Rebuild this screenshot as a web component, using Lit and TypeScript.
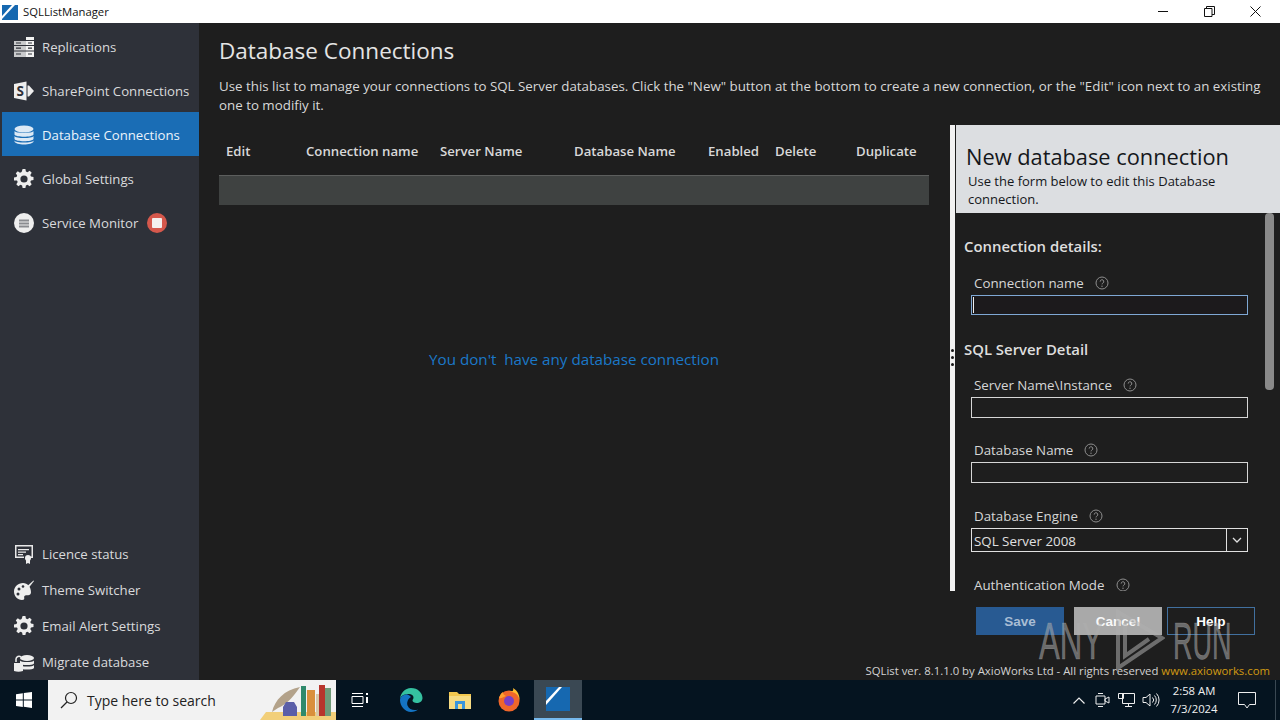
import { LitElement, html, css, svg } from 'lit';
import { customElement } from 'lit/decorators.js';

const help = html`<svg class="help" width="14" height="14" viewBox="0 0 14 14">
  <circle cx="7" cy="7" r="6" fill="none" stroke="#8d8d8d" stroke-width="1"/>
  <path d="M5.2 5.6a1.8 1.8 0 1 1 2.7 1.5c-.6.4-.9.7-.9 1.3" fill="none" stroke="#8d8d8d" stroke-width="1"/>
  <circle cx="7" cy="10.2" r=".7" fill="#8d8d8d"/>
</svg>`;

const gearPath = 'M8.6 0h2.8l.5 2.5 1.6.7 2.2-1.4 2 2-1.4 2.2.7 1.6 2.5.5v2.8l-2.5.5-.7 1.6 1.4 2.2-2 2-2.2-1.4-1.6.7-.5 2.5H8.6l-.5-2.5-1.6-.7-2.2 1.4-2-2 1.4-2.2-.7-1.6L0 11.4V8.6l2.5-.5.7-1.6-1.4-2.2 2-2 2.2 1.4 1.6-.7zM10 6.4a3.6 3.6 0 1 0 0 7.2 3.6 3.6 0 0 0 0-7.2z';

const icons: Record<string, unknown> = {
  replications: svg`<path d="M0 4h13v16H0z" fill="#c9cacc"/><path d="M12 0h8v20h-8z" fill="#f2f2f2"/>
    <path d="M0 8.500h20M0 14h20M0 3.500h20" stroke="#2e3139" stroke-width="1"/>
    <path d="M2 6h5M2 11.200h5M2 17h5M14 6h4M14 11.200h4M14 17h4" stroke="#2e3139" stroke-width="1.200"/>`,
  sharepoint: svg`<path d="M0 3l12.500-2.500v19L0 17z" fill="#eee"/><path d="M13.500 4.500h1.500l5 5.500-5 5.500h-1.500z" fill="#eee"/><text x="2.500" y="15" font-size="13.500" font-weight="700" font-family="Open Sans" fill="#2e3139">S</text>`,
  database: svg`<ellipse cx="10" cy="4" rx="9.500" ry="3.500" fill="#dce9f5"/><path d="M.5 6c1 2.500 18 2.500 19 0v3.500c-1 3-18 3-19 0zM.5 11c1 2.800 18 2.800 19 0v3c-1 3-18 3-19 0zM.5 15.500c1 2.800 18 2.800 19 0v1c-1 4-18 4-19 0z" fill="#dce9f5"/>`,
  gear: svg`<path d="${gearPath}" fill="#eee" fill-rule="evenodd"/>`,
  monitor: svg`<circle cx="10" cy="10" r="10" fill="#eee"/><path d="M5 6.500h10v2H5zM5 9.500h10v2H5zM5 12.500h10v2H5z" fill="#8a8c90"/>`,
  licence: svg`<path d="M1 1h18v13h-6v-1.500h4.500V2.500h-15v10H10V14H1z" fill="#e8e8e8"/><path d="M4 5h11v1.200H4zM4 7.500h8v1.200H4zM4 10h5v1.200H4z" fill="#e8e8e8"/><circle cx="14" cy="14" r="3" fill="#eee"/><path d="M12 16h4v4l-2-1-2 1z" fill="#eee"/>`,
  palette: svg`<path d="M9 3C4 3 0 7 0 11.500S3.500 20 8 20c2 0 2.500-1 2.200-2.300-.3-1.500.5-2.500 2-2.500h2c1.500 0 2.800-1 2.800-3C17 7 13.500 3 9 3z" fill="#eee"/><circle cx="5" cy="9" r="1.500" fill="#2e3139"/><circle cx="4" cy="14" r="1.500" fill="#2e3139"/><circle cx="9" cy="6.500" r="1.300" fill="#2e3139"/><path d="M19.500 .5l.5.5-7 9-2.500-1.500z" fill="#eee"/>`,
  migrate: svg`<ellipse cx="13" cy="6" rx="7" ry="3" fill="#eee"/><path d="M6 8.500c1 2 13 2 14 0v3c-1 2-13 2-14 0zM6 13c1 2 13 2 14 0v3c-1 2-13 2-14 0z" fill="#eee"/><path d="M0 11h9v8c-3 1-6 1-9 0z" fill="#eee"/><path d="M2 10V7a3 3 0 0 1 5-2" fill="none" stroke="#eee" stroke-width="1.500"/>`,
};

const navIcon = (name: string) => html`<svg class="nav-icon" width="20" height="20" viewBox="0 0 20 20">${icons[name]}</svg>`;

@customElement('app-root')
export class AppRoot extends LitElement {
  static styles = css`
    :host {
      display: flex;
      flex-direction: column;
      width: 1280px;
      height: 720px;
      overflow: hidden;
      position: relative;
      font-family: "Open Sans", "Noto Sans", sans-serif;
      font-size: 13.2px;
      color: #d6d6d6;
      background: #1e1e1e;
    }
    .titlebar {
      display: flex;
      align-items: center;
      height: 23px;
      flex: none;
      background: #fff;
      color: #111;
      font-size: 11.3px;
      padding-right: 2px;
    }
    .logo { margin: 0 5px 0 2px; }
    .title { flex: 1; }
    .win-btn {
      width: 46px;
      height: 23px;
      display: flex;
      align-items: center;
      justify-content: center;
    }
    .main { flex: 1; display: flex; min-height: 0; }
    .sidebar {
      width: 199px;
      flex: none;
      background: #2e3139;
      display: flex;
      flex-direction: column;
      padding-top: 1px;
      box-sizing: border-box;
    }
    .nav { flex: 1; }
    .item {
      display: flex;
      align-items: center;
      height: 44px;
      box-sizing: border-box;
      padding: 2px 0 0 12px;
      gap: 8px;
      margin-left: 2px;
      color: #d9dadc;
      white-space: nowrap;
    }
    .item.active { background: #1a6db5; color: #eaf3fb; }
    .bottom .item { height: 36px; padding-top: 0; }
    .stop {
      width: 20px;
      height: 20px;
      border-radius: 50%;
      background: #d5584c;
      display: flex;
      align-items: center;
      justify-content: center;
      margin-left: 1px;
    }
    .stop i { width: 10px; height: 10px; background: #f4f0ee; border-radius: 1px; }
    .content { flex: 1; display: flex; flex-direction: column; min-width: 0; }
    .head { height: 102px; flex: none; padding-left: 20px; box-sizing: border-box; }
    h1 {
      margin: 0;
      padding-top: 11px;
      font-size: 22.5px;
      line-height: 34px;
      font-weight: 400;
      color: #e4e4e4;
    }
    .desc { width: 1045px; margin: 9px 0 0; line-height: 19px; color: #d8d8d8; font-size: 13.33px; }
    .split { flex: 1; display: flex; min-height: 0; }
    .list { width: 751px; flex: none; padding: 0 21px 0 20px; box-sizing: border-box; display: flex; flex-direction: column; }
    .thead {
      display: grid;
      grid-template-columns: 80px 134px 134px 134px 67px 81px 1fr;
      padding: 17px 0 0 7px;
      height: 50px;
      box-sizing: border-box;
      line-height: 18px;
      font-weight: 600;
      color: #d8d8d8;
    }
    .row { height: 30px; background: #3f4241; border-top: 1px solid #5c5e5d; box-sizing: border-box; }
    .empty {
      text-align: center;
      color: #1b78c8;
      font-size: 15.2px;
      line-height: 20px;
      margin-top: 144px;
    }
    .panel { width: 330px; flex: none; display: flex; flex-direction: column; position: relative; }
    .panel-top { display: flex; height: 466px; }
    .splitter { width: 5px; margin-right: 1px; flex: none; background: #f2f2f2; }
    .dots { position: absolute; left: 1px; top: 224px; display: flex; flex-direction: column; gap: 4px; }
    .dots i { width: 3px; height: 3px; border-radius: 50%; background: #161616; display: block; }
    .panel-main { flex: 1; display: flex; flex-direction: column; min-width: 0; }
    .panel-head {
      height: 88px;
      flex: none;
      background: #dcdee1;
      color: #15171b;
      padding: 19px 0 0 10px;
      box-sizing: border-box;
    }
    .panel-head h2 { margin: 0; font-size: 21.8px; line-height: 26px; font-weight: 400; white-space: nowrap; }
    .panel-head p { margin: 2px 0 0 2px; width: 290px; line-height: 18px; font-size: 13px; }
    .form-wrap { flex: 1; position: relative; overflow: hidden; }
    .form { padding: 23px 0 0 8px; font-size: 13.33px; }
    .thumb { position: absolute; right: 6px; top: 0; width: 9px; height: 177px; border-radius: 4px; background: #8a8a8a; }
    h3 { margin: 0; font-size: 14.9px; line-height: 20px; font-weight: 600; color: #dedede; }
    h3.second { margin-top: 24px; }
    .field { margin: 24px 0 0 7px; width: 277px; }
    .field.first { margin-top: 18px; }
    .field.second { margin-top: 17px; }
    .field.tight { margin-top: 23px; }
    .field label { display: flex; align-items: center; gap: 11px; height: 18px; padding-left: 3px; color: #d6d6d6; white-space: nowrap; }
    .field.last { margin-top: 26px; }
    .field.last label { height: 14px; line-height: 14px; }
    .input { height: 21px; margin-top: 3px; border: 1px solid #d6d6d6; box-sizing: border-box; }
    .input.focus { height: 20px; border-color: #7fa8d4; background: #1c1a1c; }
    .caret { display: block; width: 1px; height: 16px; margin: 1px 0 0 1px; background: #eee; }
    .select { height: 24px; margin-top: 3px; border: 1px solid #e0e0e0; box-sizing: border-box; display: flex; align-items: center; padding: 1px 0 0 2px; color: #e0e0e0; }
    .select span { flex: 1; }
    .select b { width: 20px; height: 22px; margin-top: -1px; border-left: 1px solid #e0e0e0; display: flex; align-items: center; justify-content: center; }
    .actions { display: flex; margin: 16px 0 0 26px; }
    .btn {
      width: 88px;
      height: 28px;
      display: flex;
      align-items: center;
      justify-content: center;
      box-sizing: border-box;
      font-weight: 700;
      font-size: 13.5px;
      color: #fff;
      font-family: "Liberation Sans", sans-serif;
    }
    .save { background: #285a92; color: #a9bdd4; margin-right: 10px; }
    .cancel { background: #a9a9a9; color: #f8f8f8; margin-right: 5px; }
    .help-btn { border: 1px solid #41709f; }
    .footer {
      height: 18px;
      flex: none;
      text-align: right;
      padding-right: 10px;
      font-size: 11.35px;
      line-height: 18px;
      color: #d2d2d2;
      white-space: nowrap;
    }
    .footer a { color: #d29a12; }
    .taskbar {
      height: 40px;
      flex: none;
      display: flex;
      align-items: center;
      background: #051420;
      color: #f0f0f0;
    }
    .start { width: 48px; display: flex; justify-content: center; }
    .search {
      width: 288px;
      height: 40px;
      background: #f2f2f2;
      display: flex;
      align-items: center;
      padding-left: 12px;
      box-sizing: border-box;
      color: #222;
      font-size: 14px;
      gap: 9px;
      overflow: hidden;
    }
    .search span { flex: 1; white-space: nowrap; }
    .search svg.books { flex: none; }
    .tb { width: 49px; height: 40px; display: flex; align-items: center; justify-content: center; flex: none; }
    .tb.view { width: 48px; margin-right: 2px; }
    .tb.active { width: 48px; margin-left: 1px; background: #3a4853; border-bottom: 2px solid #76b9ed; box-sizing: border-box; }
    .spacer { flex: 1; }
    .tray { width: 24px; display: flex; justify-content: center; flex: none; }
    .clock { width: 50px; margin-left: 6px; text-align: center; font-size: 11.3px; line-height: 18px; white-space: nowrap; }
    .notify { width: 56px; display: flex; justify-content: center; }
    .desk { width: 5px; height: 40px; border-left: 1px solid #3a4853; box-sizing: border-box; }
    .mark {
      position: absolute;
      left: 1039px;
      top: 610px;
      display: flex;
      align-items: center;
      font-family: "Liberation Sans", sans-serif;
      font-size: 52px;
      line-height: 62px;
      color: rgba(175, 175, 175, .55);
      -webkit-text-stroke: .5px rgba(175, 175, 175, .55);
      pointer-events: none;
    }
    .mark span { display: block; transform-origin: left center; }
    .mark .any { width: 74px; transform: scaleX(.6); }
    .mark .play { flex: none; margin-top: -2px; }
    .mark .run { margin-left: 8px; transform: scaleX(.52); }
  `;

  render() {
    return html`
      <div class="titlebar">
        <svg class="logo" width="16" height="16" viewBox="0 0 16 16">
          <rect x="0" y="1" width="16" height="15" fill="#1668b0"/>
          <path d="M0 12L10 1h3L0 15z" fill="#fff"/>
        </svg>
        <div class="title">SQLListManager</div>
        <div class="win-btn"><svg width="11" height="11"><path d="M0 5.500h10" stroke="#111"/></svg></div>
        <div class="win-btn"><svg width="11" height="11"><path d="M.5 2.500h7.500v8H.5zM2.500 2.500V.5h8v8H8" fill="none" stroke="#111"/></svg></div>
        <div class="win-btn"><svg width="11" height="11"><path d="M.5.5l10 10M10.500.5l-10 10" stroke="#111"/></svg></div>
      </div>
      <div class="main">
        <nav class="sidebar">
          <div class="nav">
            <div class="item">${navIcon('replications')}Replications</div>
            <div class="item">${navIcon('sharepoint')}SharePoint Connections</div>
            <div class="item active">${navIcon('database')}Database Connections</div>
            <div class="item">${navIcon('gear')}Global Settings</div>
            <div class="item">${navIcon('monitor')}Service Monitor<span class="stop"><i></i></span></div>
          </div>
          <div class="bottom">
            <div class="item">${navIcon('licence')}Licence status</div>
            <div class="item">${navIcon('palette')}Theme Switcher</div>
            <div class="item">${navIcon('gear')}Email Alert Settings</div>
            <div class="item">${navIcon('migrate')}Migrate database</div>
          </div>
        </nav>
        <div class="content">
          <div class="head">
            <h1>Database Connections</h1>
            <p class="desc">Use this list to manage your connections to SQL Server databases. Click the "New" button at the bottom to create a new connection, or the "Edit" icon next to an existing one to modifiy it.</p>
          </div>
          <div class="split">
            <section class="list">
              <div class="thead">
                <span>Edit</span><span>Connection name</span><span>Server Name</span><span>Database Name</span><span>Enabled</span><span>Delete</span><span>Duplicate</span>
              </div>
              <div class="row"></div>
              <div class="empty">You don't&nbsp; have any database connection</div>
            </section>
            <section class="panel">
              <div class="panel-top">
                <div class="splitter"></div>
                <div class="panel-main">
                  <div class="panel-head">
                    <h2>New database connection</h2>
                    <p>Use the form below to edit this Database connection.</p>
                  </div>
                  <div class="form-wrap">
                    <div class="form">
                      <h3>Connection details:</h3>
                      <div class="field first"><label>Connection name ${help}</label><div class="input focus"><i class="caret"></i></div></div>
                      <h3 class="second">SQL Server Detail</h3>
                      <div class="field second"><label>Server Name\\Instance ${help}</label><div class="input"></div></div>
                      <div class="field tight"><label>Database Name ${help}</label><div class="input"></div></div>
                      <div class="field"><label>Database Engine ${help}</label>
                        <div class="select"><span>SQL Server 2008</span><b><svg width="10" height="6"><path d="M1 1l4 4 4-4" fill="none" stroke="#e0e0e0" stroke-width="1.300"/></svg></b></div>
                      </div>
                      <div class="field last"><label>Authentication Mode ${help}</label></div>
                    </div>
                    <div class="thumb"></div>
                  </div>
                </div>
              </div>
              <div class="dots"><i></i><i></i><i></i></div>
              <div class="actions">
                <div class="btn save">Save</div>
                <div class="btn cancel">Cancel</div>
                <div class="btn help-btn">Help</div>
              </div>
            </section>
          </div>
          <div class="footer">SQList ver. 8.1.1.0 by AxioWorks Ltd - All rights reserved <a>www.axioworks.com</a></div>
        </div>
      </div>
      <div class="taskbar">
        <div class="start"><svg width="16" height="16"><path d="M0 2.200l6.800-1v6.400H0zM7.800 1L16 0v7.600H7.800zM0 8.600h6.800V15L0 14zM7.800 8.600H16V16l-8.200-1.200z" fill="#fff"/></svg></div>
        <div class="search">
          <svg width="18" height="18" viewBox="0 0 18 18"><circle cx="11" cy="7" r="5.500" fill="none" stroke="#222" stroke-width="1.200"/><path d="M7 11l-6 6" stroke="#222" stroke-width="1.300"/></svg>
          <span>Type here to search</span>
          <svg class="books" width="76" height="40" viewBox="0 0 76 40">
            <path d="M0 40l6-8h70v8z" fill="#f2cf79"/>
            <path d="M12 32c3-12 12-22 28-25-5 7-12 17-22 21z" fill="#b3a28a"/>
            <path d="M26 22h8l3 5v9H23v-9z" fill="#5b5fa8"/>
            <rect x="41" y="6" width="5" height="30" fill="#2f8a6c"/>
            <rect x="47" y="10" width="8" height="26" fill="#d9903c"/>
            <rect x="56" y="14" width="3" height="22" fill="#d8c9a8"/>
            <rect x="59" y="5" width="6" height="31" fill="#b8352c"/>
            <rect x="65" y="8" width="6" height="28" fill="#6f9a78"/>
          </svg>
        </div>
        <div class="tb view"><svg width="18" height="16"><path d="M1 4.500h11v7H1zM1 1.500h11M1 14.500h11" fill="none" stroke="#fff"/><path d="M15 1h2v2h-2zM15 5h2v6h-2z" fill="#fff"/></svg></div>
        <div class="tb">
          <svg width="24" height="24" viewBox="0 0 24 24">
            <path d="M1 12C1 5 6 0 12 0c7 0 11.500 5 11.500 10 0 3-2.500 5-6 5-2 0-4-1-4-2.500 0-1 1-1.500 1-3 0-2-2-3.500-4.500-3.500C5 6 1 8 1 12z" fill="#35c1a0"/>
            <path d="M1 12c0 6 5 12 11 12 3 0 5.500-1 7-2.500-4 1.500-9 0-10.500-4-1-3 .5-7 3.500-8.500C10 7 8 6 7 6.500 3 7.500 1 9 1 12z" fill="#1474c4"/>
          </svg>
        </div>
        <div class="tb"><svg width="24" height="20" viewBox="0 0 24 20"><path d="M1 2h8l2 2h12v15H1z" fill="#f3c84f"/><path d="M1 6h22v13H1z" fill="#f7dc83"/><path d="M7 11h10v8H7z" fill="#3a96dd"/><path d="M10 14h4v5h-4z" fill="#f7dc83"/></svg></div>
        <div class="tb">
          <svg width="24" height="24" viewBox="0 0 24 24">
            <circle cx="12" cy="13" r="10.500" fill="#f0662a"/>
            <path d="M12 4c5-1 10 3 10.500 9C23 8 21 3 16 0c1 3-1 4-4 4z" fill="#ffbd2e"/>
            <circle cx="12" cy="13" r="5" fill="#7a3fc4"/>
            <path d="M2 10c1-3 2-5 4-6 0 2 1 3 3 4-3 1-5 3-7 2z" fill="#ffa02e"/>
          </svg>
        </div>
        <div class="tb active"><svg width="24" height="24" viewBox="0 0 24 24"><rect width="24" height="24" fill="#1668b0"/><path d="M0 14L13 0h3L0 18z" fill="#fff"/></svg></div>
        <div class="spacer"></div>
        <div class="tray"><svg width="12" height="7"><path d="M.5 6.500L6 1l5.500 5.500" fill="none" stroke="#eee" stroke-width="1.200"/></svg></div>
        <div class="tray"><svg width="16" height="16"><path d="M1 4h9v8H1zM10 7l4-2v6l-4-2zM3 1.500h5M3 14.500h5" fill="none" stroke="#eee"/></svg></div>
        <div class="tray"><svg width="18" height="16"><path d="M4.500 1.500h12v10h-12zM10.500 11.500v3M7 14.500h7M.5 1.500h5v5h-5z" fill="none" stroke="#eee"/></svg></div>
        <div class="tray"><svg width="18" height="16"><path d="M1 5.500h3L8 2v12L4 10.500H1zM10.500 5.500a3.500 3.500 0 0 1 0 5M12.500 3.500a6.500 6.500 0 0 1 0 9M14.500 1.500a9.500 9.500 0 0 1 0 13" fill="none" stroke="#eee"/></svg></div>
        <div class="clock">2:58 AM<br>7/3/2024</div>
        <div class="notify"><svg width="18" height="17"><path d="M.5.5h17v12h-6L9 16l-2.500-3.500h-6z" fill="none" stroke="#eee"/></svg></div>
        <div class="desk"></div>
      </div>
      <div class="mark">
        <span class="any">ANY</span>
        <svg class="play" width="52" height="62" viewBox="0 0 52 62"><path d="M5 3l44 26-44 30zM12 14v33l24-17" fill="none" stroke="rgba(175,175,175,.55)" stroke-width="4"/></svg>
        <span class="run">RUN</span>
      </div>
    `;
  }
}

declare global {
  interface HTMLElementTagNameMap {
    'app-root': AppRoot;
  }
}
